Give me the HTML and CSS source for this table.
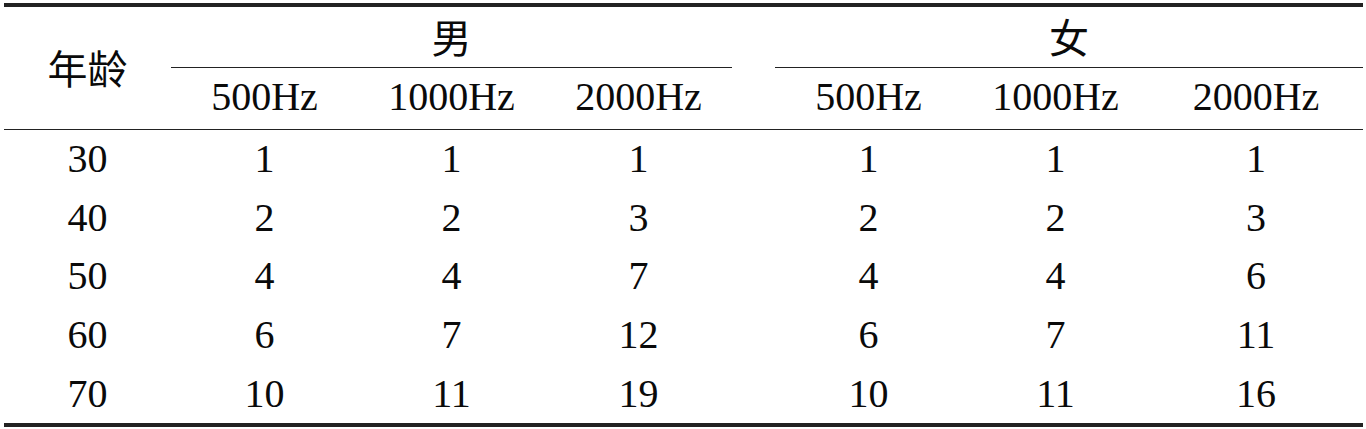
FILE: index.html
```html
<!DOCTYPE html>
<html lang="zh">
<head>
<meta charset="utf-8">
<title>年龄与听阈</title>
<link rel="stylesheet" href="styles.css">
</head>
<body>
<div class="tbl">
  <div class="cell cjk age-head">年龄</div>
  <div class="cell cjk group male">男</div>
  <div class="cell gap-top"></div>
  <div class="cell cjk group female">女</div>

  <div class="cell freq">500Hz</div>
  <div class="cell freq">1000Hz</div>
  <div class="cell freq">2000Hz</div>
  <div class="cell freq"></div>
  <div class="cell freq">500Hz</div>
  <div class="cell freq">1000Hz</div>
  <div class="cell freq">2000Hz</div>

  <div class="cell">30</div><div class="cell">1</div><div class="cell">1</div><div class="cell">1</div><div class="cell"></div><div class="cell">1</div><div class="cell">1</div><div class="cell">1</div>
  <div class="cell">40</div><div class="cell">2</div><div class="cell">2</div><div class="cell">3</div><div class="cell"></div><div class="cell">2</div><div class="cell">2</div><div class="cell">3</div>
  <div class="cell">50</div><div class="cell">4</div><div class="cell">4</div><div class="cell">7</div><div class="cell"></div><div class="cell">4</div><div class="cell">4</div><div class="cell">6</div>
  <div class="cell">60</div><div class="cell">6</div><div class="cell">7</div><div class="cell">12</div><div class="cell"></div><div class="cell">6</div><div class="cell">7</div><div class="cell">11</div>
  <div class="cell">70</div><div class="cell">10</div><div class="cell">11</div><div class="cell">19</div><div class="cell"></div><div class="cell">10</div><div class="cell">11</div><div class="cell">16</div>
</div>
</body>
</html>
```
FILE: styles.css
```css
html, body {
  margin: 0;
  padding: 0;
  background: #ffffff;
}
body {
  padding: 3px 0 0 4px;
  font-family: "Liberation Serif", "Times New Roman", serif;
  font-size: 40px;
  color: #0a0a0a;
}
.tbl {
  display: grid;
  width: 1359px;
  grid-template-columns: 167px 187px 187px 187px 43px 187px 187px 214px;
  grid-template-rows: 61px 62px repeat(5, 58.6px);
  border-top: 4px solid #222222;
  border-bottom: 4px solid #222222;
}
.cell {
  display: flex;
  align-items: center;
  justify-content: center;
  line-height: 1;
  white-space: nowrap;
}
.cjk {
  font-family: "Noto Sans CJK SC", sans-serif;
  font-weight: 400;
}
.age-head {
  grid-row: 1 / span 2;
  grid-column: 1;
  border-bottom: 1px solid #222222;
  padding-bottom: 2px;
}
.group {
  border-bottom: 1px solid #222222;
  padding-bottom: 2px;
}
.male {
  grid-column: 2 / span 3;
}
.gap-top {
  grid-column: 5;
}
.female {
  grid-column: 6 / span 3;
}
.freq {
  border-bottom: 1px solid #222222;
  padding-bottom: 4px;
}
```
